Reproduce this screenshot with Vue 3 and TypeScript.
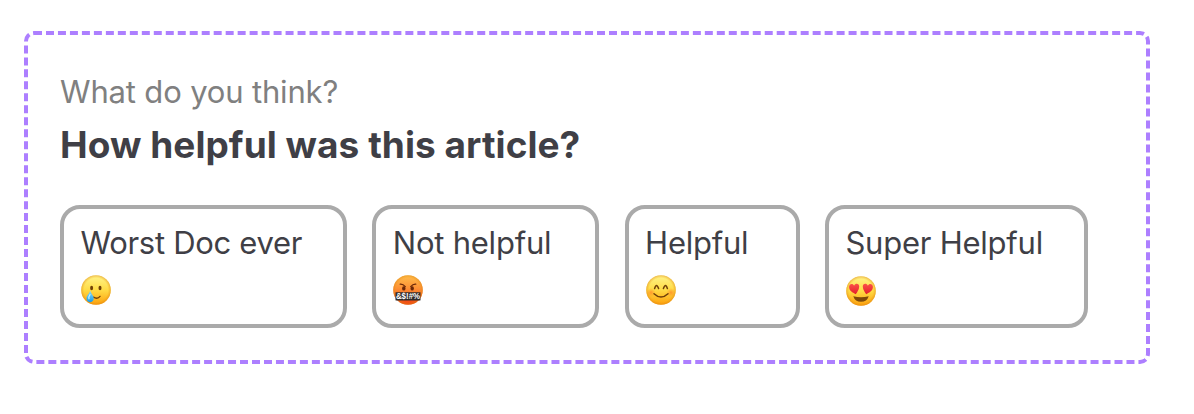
<script setup lang="ts">
type Mood = 'tear' | 'rage' | 'smile' | 'love'
interface Option { label: string; mood: Mood }

const options: Option[] = [
  { label: 'Worst Doc ever', mood: 'tear' },
  { label: 'Not helpful', mood: 'rage' },
  { label: 'Helpful', mood: 'smile' },
  { label: 'Super Helpful', mood: 'love' },
]
</script>

<template>
  <main class="page">
    <section class="survey">
      <p class="eyebrow">What do you think?</p>
      <h1 class="title">How helpful was this article?</h1>
      <div class="options">
        <button v-for="o in options" :key="o.mood" type="button" class="card" :class="o.mood">
          <span class="label">{{ o.label }}</span>
          <svg class="emoji" viewBox="0 0 30 30" aria-hidden="true">
            <defs>
              <linearGradient id="yellow" x1="0" y1="0" x2="0" y2="1">
                <stop offset="0" stop-color="#fff48a" />
                <stop offset="0.5" stop-color="#ffdb45" />
                <stop offset="1" stop-color="#fda00c" />
              </linearGradient>
              <radialGradient id="edge">
                <stop offset="0.8" stop-color="#f09a10" stop-opacity="0" />
                <stop offset="1" stop-color="#d98012" stop-opacity="0.5" />
              </radialGradient>
              <linearGradient id="red" x1="0" y1="0" x2="0" y2="1">
                <stop offset="0" stop-color="#ffbe4c" />
                <stop offset="0.45" stop-color="#fd8f35" />
                <stop offset="1" stop-color="#f03f10" />
              </linearGradient>
              <radialGradient id="blush">
                <stop offset="0" stop-color="#ff6a20" stop-opacity="0.55" />
                <stop offset="1" stop-color="#ff7a20" stop-opacity="0" />
              </radialGradient>
              <linearGradient id="drop" x1="0" y1="0" x2="0" y2="1">
                <stop offset="0" stop-color="#8edcfa" />
                <stop offset="1" stop-color="#169be8" />
              </linearGradient>
              <linearGradient id="heart" x1="0" y1="0" x2="0" y2="1">
                <stop offset="0" stop-color="#fb5148" />
                <stop offset="1" stop-color="#e31f2c" />
              </linearGradient>
            </defs>
            <circle cx="15" cy="15" r="14.8" :fill="o.mood === 'rage' ? 'url(#red)' : 'url(#yellow)'" />
            <circle cx="15" cy="15" r="14.8" fill="url(#edge)" />
            <g v-if="o.mood === 'tear'">
              <ellipse cx="10.6" cy="13" rx="1.5" ry="2.2" fill="#704008" />
              <ellipse cx="19" cy="13" rx="1.5" ry="2.2" fill="#704008" />
              <path d="M12.5 22.2Q16.5 24.5 19 21.4" fill="none" stroke="#704008" stroke-width="1.4" stroke-linecap="round" />
              <path d="M9.2 15.6C8.6 18.7 5.4 20.7 5.5 23.8C5.7 28.5 12.5 28.4 12.7 23.8C12.8 20.7 10 18.8 9.2 15.6Z" fill="url(#drop)" />
              <path d="M9 19.6Q7.3 22 8 23.8" fill="none" stroke="#c4f1ff" stroke-width="1.2" stroke-linecap="round" />
            </g>
            <g v-else-if="o.mood === 'rage'">
              <path d="M7.2 9.2Q10 8.9 12.3 11.6M22.8 9.2Q20 8.9 17.7 11.6" fill="none" stroke="#6c2808" stroke-width="1.2" stroke-linecap="round" />
              <ellipse cx="10.8" cy="13.4" rx="1.7" ry="2.2" fill="#6c2808" />
              <ellipse cx="19.2" cy="13.4" rx="1.7" ry="2.2" fill="#6c2808" />
              <rect x="2.5" y="17.2" width="25" height="8.2" rx="0.3" fill="#302b2a" />
              <text x="2.9" y="24.2" textLength="24.2" lengthAdjust="spacingAndGlyphs" class="curse">&amp;$!#%</text>
            </g>
            <g v-else-if="o.mood === 'smile'">
              <circle cx="5" cy="17.5" r="4.5" fill="url(#blush)" />
              <circle cx="25" cy="17.5" r="4.5" fill="url(#blush)" />
              <path d="M8.6 13.6Q10.4 7.2 12.6 13.6M17.4 13.6Q19.6 7.2 21.4 13.6" fill="none" stroke="#704008" stroke-width="1.5" stroke-linecap="round" />
              <path d="M8 18.7Q15 25.3 22 18.7" fill="none" stroke="#704008" stroke-width="1.5" stroke-linecap="round" />
            </g>
            <g v-else>
              <path d="M7.3 20.3Q15 22 22.7 20.3Q21 25.8 15 25.8Q9 25.8 7.3 20.3Z" fill="#7d4a0a" />
              <path d="M9.7 18.2C6.5 16.7 3.1 14.7 3.1 11.1C3.1 7.6 7 7.2 8.1 9.7C9.5 6.5 13.5 7.4 13.2 10.7C13 13.8 11.2 16.1 9.7 18.2Z" fill="url(#heart)" />
              <path d="M20.3 18.2C23.5 16.7 26.9 14.7 26.9 11.1C26.9 7.6 23 7.2 21.9 9.7C20.5 6.5 16.5 7.4 16.8 10.7C17 13.8 18.8 16.1 20.3 18.2Z" fill="url(#heart)" />
            </g>
          </svg>
        </button>
      </div>
    </section>
  </main>
</template>

<style>
body { background: #fff; }
</style>

<style scoped>
.page {
  box-sizing: border-box;
  height: 414px;
  padding: 31px 44px 50px 24px;
  font-family: Inter, "Liberation Sans", sans-serif;
}
.survey {
  box-sizing: border-box;
  height: 333px;
  padding: 36px 32px;
  border: 4px dashed #ad7fff;
  border-radius: 10px;
}
.eyebrow {
  margin: 0;
  font-size: 31px;
  line-height: 42px;
  letter-spacing: -0.16px;
  color: #808080;
}
.title {
  margin: 8px 0 0;
  font-size: 37px;
  font-weight: 700;
  line-height: 48px;
  letter-spacing: 0.05px;
  color: #3f3f46;
}
.options {
  display: grid;
  grid-template-columns: 287px 227px 175px 263px;
  column-gap: 25.3px;
  margin-top: 36px;
}
.card {
  display: flex;
  flex-direction: column;
  align-items: flex-start;
  box-sizing: border-box;
  height: 123px;
  padding: 14px 16.5px;
  border: 4px solid #aaa;
  border-radius: 20px;
  background: #fff;
  font: inherit;
}
.label {
  font-size: 31px;
  line-height: 40px;
  letter-spacing: -0.23px;
  color: #3f3f46;
  white-space: nowrap;
}
.tear .label { letter-spacing: -0.3px; }
.emoji {
  width: 30px;
  height: 30px;
  margin-top: 12px;
}
.smile .emoji,
.love .emoji { margin-left: 0.7px; }
.love .emoji { margin-top: 13px; }
.curse {
  font-family: "Liberation Sans", sans-serif;
  font-size: 8.4px;
  font-weight: 700;
  fill: #fff;
}
</style>
